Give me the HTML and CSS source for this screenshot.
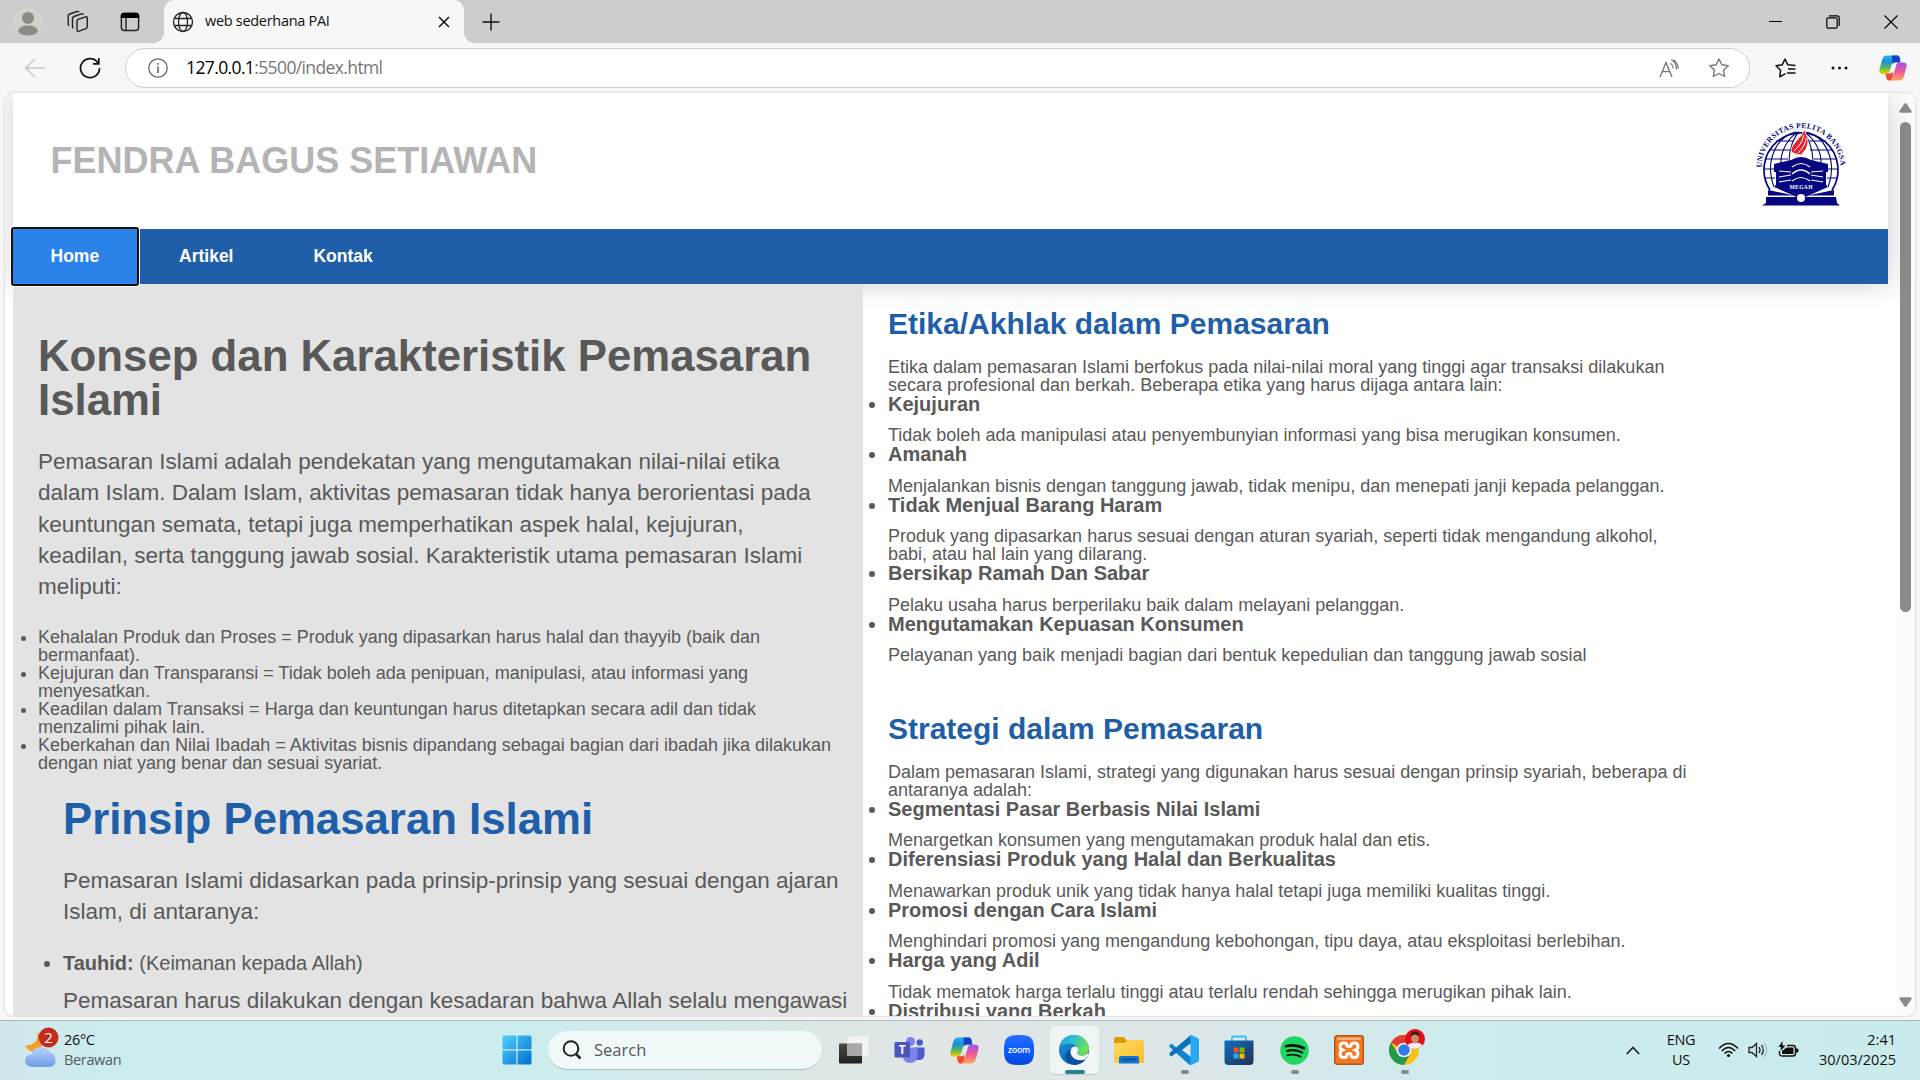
FILE: index.html
```
<!DOCTYPE html>
<html lang="id">
<head>
<meta charset="utf-8">
<title>web sederhana PAI</title>
<link rel="stylesheet" href="styles.css">
</head>
<body>
<svg width="0" height="0" class="defs" aria-hidden="true">
  <defs>
    <linearGradient id="cpA" x1="0" y1="0" x2="0" y2="1"><stop offset="0" stop-color="#1fb0f5"/><stop offset=".35" stop-color="#1c8fd8"/><stop offset=".7" stop-color="#63bd4a"/><stop offset="1" stop-color="#ffd000"/></linearGradient>
    <linearGradient id="cpB" x1="0" y1="0" x2="0" y2="1"><stop offset="0" stop-color="#a04ff0"/><stop offset=".5" stop-color="#ee5a96"/><stop offset="1" stop-color="#ffa45c"/></linearGradient>
    <linearGradient id="win" x1="0" y1="0" x2="1" y2="1"><stop offset="0" stop-color="#4fd0fb"/><stop offset="1" stop-color="#0270d0"/></linearGradient>
    <linearGradient id="edA" x1="0" y1="0" x2="1" y2=".3"><stop offset="0" stop-color="#1b9de0"/><stop offset=".5" stop-color="#30c3cf"/><stop offset="1" stop-color="#6ce052"/></linearGradient>
    <linearGradient id="edB" x1="0" y1="0" x2="1" y2="1"><stop offset="0" stop-color="#1a9ae0"/><stop offset="1" stop-color="#0a4c9a"/></linearGradient>
    <linearGradient id="fold" x1="0" y1="0" x2="1" y2="1"><stop offset="0" stop-color="#ffdc6a"/><stop offset="1" stop-color="#fbbd22"/></linearGradient>
    <linearGradient id="store" x1="0" y1="0" x2="1" y2="1"><stop offset="0" stop-color="#0e6fc4"/><stop offset="1" stop-color="#24304f"/></linearGradient>
    <linearGradient id="dark" x1="0" y1="0" x2="0" y2="1"><stop offset="0" stop-color="#4a4a48"/><stop offset="1" stop-color="#20201f"/></linearGradient>
    <linearGradient id="zm" x1="0" y1="0" x2="0" y2="1"><stop offset="0" stop-color="#2a6cff"/><stop offset=".5" stop-color="#0b5cff"/><stop offset="1" stop-color="#0646d8"/></linearGradient>
    <linearGradient id="cloud" x1="0" y1="0" x2="0" y2="1"><stop offset="0" stop-color="#b9d5fb"/><stop offset="1" stop-color="#709be8"/></linearGradient>
    <symbol id="copilot" viewBox="0 0 28 26">
      <path d="M18 0.5H8C5 0.5 4 2 3 5L0.6 14C-0.2 17.5 1 19 4 19H7.5C9.5 19 10.2 17.500 10.700 16L13.500 7C14 5 15 4 17 4H21.500C20.800 2 20.500 0.500 18 0.500Z" fill="url(#cpA)"/>
      <path d="M13 0.500H18C20.500 0.500 20.500 3 21.800 7.500H17C15 7.500 14 8 13.400 9.500Z" fill="#1641c0"/>
      <path d="M10 25.500H20C23 25.500 24.200 24 25 21L27.400 12C28.200 8.500 27 7.500 24 7.500H20.500C18.500 7.500 17.800 8.500 17.300 10L14.500 19C14 21 13 21.500 11 21.500H7C7.500 24 8.300 25.500 10 25.500Z" fill="url(#cpB)"/>
      <path d="M6.500 18.500H10.500L14 17.500 13.600 21.500C12.600 24.500 12 25.500 10 25.500 7.800 25.500 7.500 22.500 6.500 18.500Z" fill="#ee4b36"/>
    </symbol>
  </defs>
</svg>

<div class="screen">
  <header class="tabstrip">
    <div class="tabstrip-tools">
      <svg width="28" height="28" viewBox="0 0 28 28"><circle cx="14" cy="14" r="13.300" fill="#d2d0cc" stroke="#dddbd8"/><circle cx="14" cy="10" r="6" fill="#8d8a86"/><path d="M4 23.500C5 18.500 9 17.500 14 17.500S23 18.500 24 23.500C21.500 26.500 18 27.500 14 27.500S6.500 26.500 4 23.500Z" fill="#8d8a86"/></svg>
      <svg width="24" height="24" viewBox="0 0 24 24" fill="none" stroke="#222" stroke-width="1.400" stroke-linejoin="round"><path d="M12.200 9.300 19.500 6.800Q21.300 6.300 21.300 8.200V16.500Q21.300 18 20 18.600L13 21.200Q11 21.800 11 19.800V11.200Q11 9.800 12.200 9.300Z"/><path d="M7.300 18.300Q6.500 17.800 6.500 16.500V8.500Q6.500 7 8 6.500L15.500 3.900Q17 3.500 17.300 4.700"/><path d="M3.200 15.500Q2.200 15 2.200 13.700V6Q2.200 4.500 3.700 4L11 1.500Q12.500 1.100 12.900 2.300"/></svg>
      <svg width="20" height="20" viewBox="0 0 20 20"><rect x="1.400" y="1.400" width="17.200" height="17.200" rx="3" fill="none" stroke="#222" stroke-width="1.500"/><path d="M.8 6V4Q.8.700 4 .700H16Q19.200.700 19.200 4V6Z" fill="#000"/><path d="M6 6V18.500" stroke="#222" stroke-width="1.400"/></svg>
    </div>
    <div class="tab">
      <svg width="22" height="22" viewBox="0 0 22 22" fill="none" stroke="#222" stroke-width="1.300"><circle cx="11" cy="11" r="9.500"/><ellipse cx="11" cy="11" rx="4.500" ry="9.500"/><path d="M2.500 7.500H19.500M2.500 14.500H19.500"/></svg>
      <span class="tab-title">web sederhana PAI</span>
      <svg width="12" height="12" viewBox="0 0 12 12" stroke="#111" stroke-width="1.500"><path d="M1 1 11 11M11 1 1 11"/></svg>
    </div>
    <svg class="newtab" width="18" height="18" viewBox="0 0 18 18" stroke="#111" stroke-width="1.400"><path d="M9 0.500V17.500M.5 9H17.500"/></svg>
    <div class="winbuttons">
      <svg width="13" height="14" viewBox="0 0 13 14" stroke="#000" stroke-width="1"><path d="M0 6.500H13"/></svg>
      <svg width="14" height="14" viewBox="0 0 14 14" fill="none" stroke="#000" stroke-width="1.200"><rect x=".8" y="2.800" width="10.400" height="10.400" rx="1.500"/><path d="M3 .8H11Q13.200.8 13.200 3V11"/></svg>
      <svg width="14" height="14" viewBox="0 0 14 14" stroke="#000" stroke-width="1.100"><path d="M.5.500 13.500 13.500M13.500.500.500 13.500"/></svg>
    </div>
  </header>

  <div class="toolbar">
    <svg width="22" height="22" viewBox="0 0 22 22" fill="none" stroke="#c8c8c8" stroke-width="1.500"><path d="M21 11H2M11 2 1.500 11 11 20"/></svg>
    <svg class="reload" width="22" height="22" viewBox="0 0 22 22" fill="none" stroke="#111" stroke-width="1.700"><path d="M19.300 6.500A9.500 9.500 0 1 0 20.500 11M19.800 1V6.800H14"/></svg>
    <div class="address">
      <svg width="20" height="20" viewBox="0 0 20 20" fill="none" stroke="#666" stroke-width="1.300"><circle cx="10" cy="10" r="9.200"/><path d="M10 8.500V15M10 5V6.800" stroke-width="1.600"/></svg>
      <span class="url"><b>127.0.0.1</b>:5500/index.html</span>
      <svg width="20" height="19" viewBox="0 0 20 19" fill="none" stroke="#777" stroke-width="1.300"><path d="M1 18 7 3.500 13 18M3.200 12.700H10.800M11.500 4.200Q14 6 14.300 9.500M12.300.8Q17.300 3.500 17.500 10.500M14.500.8Q19 4.500 19.200 9.500"/></svg>
      <svg class="star" width="20" height="20" viewBox="0 0 20 20" fill="none" stroke="#777" stroke-width="1.400" stroke-linejoin="round"><path d="M10 1 12.800 6.800 19.200 7.700 14.600 12.100 15.700 18.500 10 15.500 4.300 18.500 5.400 12.100.8 7.700 7.200 6.800Z"/></svg>
    </div>
    <div class="toolbar-right">
      <svg width="21" height="20" viewBox="0 0 21 20" fill="none" stroke="#111" stroke-width="1.500" stroke-linejoin="round"><path d="M10.500 15.600 4.800 18.800 5.600 12.300 1 7.700 7.200 6.800 10 1 12.800 6.800 20.500 7.500M13 11H20.500M12 15H20.500"/></svg>
      <svg class="dots" width="17" height="4" viewBox="0 0 17 4" fill="#111"><circle cx="2" cy="2" r="1.500"/><circle cx="8.500" cy="2" r="1.500"/><circle cx="15" cy="2" r="1.500"/></svg>
      <svg width="28" height="26"><use href="#copilot"/></svg>
    </div>
  </div>

  <div class="viewport">
    <div class="page">
      <div class="masthead">
        <div class="banner">
          <h1>FENDRA BAGUS SETIAWAN</h1>
          <svg class="crest" width="92" height="86" viewBox="0 0 92 86">
            <defs><path id="arc" d="M6.500 46.500A39.500 39.500 0 0 1 85.500 46.500"/></defs>
            <text class="crest-name"><textPath href="#arc" textLength="122" lengthAdjust="spacing">UNIVERSITAS PELITA BANGSA</textPath></text>
            <g fill="none" stroke="#060680" stroke-width="1.100">
              <path d="M15 69A37 37 0 1 1 77 69" stroke-width="1.700"/>
              <path d="M19 66C8 36 26 12 42 11M26 44C25 30 34 15 44 11M34 40C34 28 39 16 44 11M58 40C58 28 53 16 48 11M66 44C67 30 58 15 48 11M73 66C84 36 66 12 50 11M21 20H38M54 20H71M14 29H37M55 29H78M10 38H33M59 38H82M9 48H20M72 48H83M10 57H20M72 57H82"/>
            </g>
            <path d="M36 30C36 22 47 17 49.500 8C51 15 55 20 52 27L47 34Q37 33 36 30Z" fill="#e8222c" stroke="#fff" stroke-width=".8"/>
            <path d="M39 30Q48 22 48.500 14M43 32Q51 24 51 17M47 33Q53 28 53 22" stroke="#fff" stroke-width="1" fill="none"/>
            <path d="M19 43 36 39Q46 33 56 39L73 43V51H71V65L46 75 21 65V51H19Z" fill="#060680"/>
            <g fill="none" stroke="#fff" stroke-width="1.200"><path d="M37 46Q46 39 55 46M37 53Q46 45 55 53M37 60Q46 53 55 60M24 50 36 51M24 56 36 54M24 61 36 59M68 50 56 51M68 56 56 54M68 61 56 59"/></g>
            <text x="46" y="68" class="crest-motto" textLength="23">MEGAH</text>
            <path d="M20 65 45 76M72 65 47 76" stroke="#060680" stroke-width="2.500"/>
            <path d="M13 69 39 74.500H13ZM79 69 53 74.500H79ZM11 76H81L82 82 85 84.500H7L11 82Z" fill="#060680"/>
            <circle cx="46" cy="77" r="4" fill="#fff"/>
          </svg>
        </div>
        <nav class="menu"><a class="active">Home</a><a>Artikel</a><a>Kontak</a></nav>
      </div>

      <div class="columns">
        <main class="lead">
          <h2>Konsep dan Karakteristik Pemasaran<br>Islami</h2>
          <p class="intro">Pemasaran Islami adalah pendekatan yang mengutamakan nilai-nilai etika<br>dalam Islam. Dalam Islam, aktivitas pemasaran tidak hanya berorientasi pada<br>keuntungan semata, tetapi juga memperhatikan aspek halal, kejujuran,<br>keadilan, serta tanggung jawab sosial. Karakteristik utama pemasaran Islami<br>meliputi:</p>
          <ul class="traits">
            <li>Kehalalan Produk dan Proses = Produk yang dipasarkan harus halal dan thayyib (baik dan<br>bermanfaat).</li>
            <li>Kejujuran dan Transparansi = Tidak boleh ada penipuan, manipulasi, atau informasi yang<br>menyesatkan.</li>
            <li>Keadilan dalam Transaksi = Harga dan keuntungan harus ditetapkan secara adil dan tidak<br>menzalimi pihak lain.</li>
            <li>Keberkahan dan Nilai Ibadah = Aktivitas bisnis dipandang sebagai bagian dari ibadah jika dilakukan<br>dengan niat yang benar dan sesuai syariat.</li>
          </ul>
          <section class="principles">
            <h2 class="blue">Prinsip Pemasaran Islami</h2>
            <p class="intro">Pemasaran Islami didasarkan pada prinsip-prinsip yang sesuai dengan ajaran<br>Islam, di antaranya:</p>
            <ul class="principle-list">
              <li><b>Tauhid:</b> (Keimanan kepada Allah)
                <p class="intro">Pemasaran harus dilakukan dengan kesadaran bahwa Allah selalu mengawasi</p></li>
            </ul>
          </section>
        </main>

        <aside class="side">
          <section>
            <h3>Etika/Akhlak dalam Pemasaran</h3>
            <p>Etika dalam pemasaran Islami berfokus pada nilai-nilai moral yang tinggi agar transaksi dilakukan<br>secara profesional dan berkah. Beberapa etika yang harus dijaga antara lain:</p>
            <ul>
              <li><b>Kejujuran</b><p>Tidak boleh ada manipulasi atau penyembunyian informasi yang bisa merugikan konsumen.</p></li>
              <li><b>Amanah</b><p>Menjalankan bisnis dengan tanggung jawab, tidak menipu, dan menepati janji kepada pelanggan.</p></li>
              <li><b>Tidak Menjual Barang Haram</b><p>Produk yang dipasarkan harus sesuai dengan aturan syariah, seperti tidak mengandung alkohol,<br>babi, atau hal lain yang dilarang.</p></li>
              <li><b>Bersikap Ramah Dan Sabar</b><p>Pelaku usaha harus berperilaku baik dalam melayani pelanggan.</p></li>
              <li><b>Mengutamakan Kepuasan Konsumen</b><p>Pelayanan yang baik menjadi bagian dari bentuk kepedulian dan tanggung jawab sosial</p></li>
            </ul>
          </section>
          <section>
            <h3>Strategi dalam Pemasaran</h3>
            <p>Dalam pemasaran Islami, strategi yang digunakan harus sesuai dengan prinsip syariah, beberapa di<br>antaranya adalah:</p>
            <ul>
              <li><b>Segmentasi Pasar Berbasis Nilai Islami</b><p>Menargetkan konsumen yang mengutamakan produk halal dan etis.</p></li>
              <li><b>Diferensiasi Produk yang Halal dan Berkualitas</b><p>Menawarkan produk unik yang tidak hanya halal tetapi juga memiliki kualitas tinggi.</p></li>
              <li><b>Promosi dengan Cara Islami</b><p>Menghindari promosi yang mengandung kebohongan, tipu daya, atau eksploitasi berlebihan.</p></li>
              <li><b>Harga yang Adil</b><p>Tidak mematok harga terlalu tinggi atau terlalu rendah sehingga merugikan pihak lain.</p></li>
              <li><b>Distribusi yang Berkah</b></li>
            </ul>
          </section>
        </aside>
      </div>
    </div>
    <div class="scrollbar">
      <svg width="13" height="10" viewBox="0 0 13 10" fill="#8b8b8b"><path d="M5.500.600Q6.500-.3 7.500.600L12.600 8Q13 9.600 11.500 9.800H1.500Q0 9.600.400 8Z"/></svg>
      <div class="thumb"></div>
      <svg width="13" height="10" viewBox="0 0 13 10" fill="#8b8b8b"><path d="M5.500 9.400Q6.500 10.300 7.500 9.400L12.600 2Q13 .4 11.500.2H1.500Q0 .4.400 2Z"/></svg>
    </div>
  </div>

  <footer class="taskbar">
    <div class="weather">
      <svg width="36" height="46" viewBox="0 0 36 46"><path d="M13 7Q16 19 1 21Q6 29 16 27L20 16Z" fill="#f3a127"/><path d="M8 42Q1 41 1 35.500 1.500 30 7.500 29.500 9 22 17 22 24 22 26 28 31.500 28 31.500 35 31.500 41.500 25 42Z" fill="url(#cloud)"/><circle cx="24.500" cy="12.500" r="10" fill="#c42b1c"/><text x="24.500" y="18" class="badge">2</text></svg>
      <div class="weather-text"><span>26°C</span><span class="dim">Berawan</span></div>
    </div>
    <div class="apps">
      <div class="app"><svg width="30" height="30" viewBox="0 0 30 30" fill="url(#win)"><path d="M.500 2Q.500.500 2 .500H14.300V14.300H.500ZM15.500.500H28Q29.500.500 29.500 2V14.300H15.500ZM.500 15.500H14.300V29.500H2Q.500 29.500.500 28ZM15.500 15.500H29.500V28Q29.500 29.500 28 29.500H15.500Z"/></svg></div>
      <div class="search"><svg width="20" height="20" viewBox="0 0 20 20" fill="none" stroke="#222" stroke-width="2"><circle cx="9" cy="8.500" r="7.300"/><path d="M14 14 18.500 18.500" stroke-width="2.500"/></svg><span>Search</span></div>
      <div class="app"><svg width="32" height="30" viewBox="0 0 32 30"><rect x="1" y="8.500" width="23" height="20" rx="1" fill="url(#dark)"/><path d="M9 1H30Q31 1 31 2V20Q31 21 30 21H24V8.500H9Z" fill="#f4f4f4" stroke="#dedede" stroke-width=".5"/><path d="M9 8.500H24V21H9Z" fill="#a9a9a8"/></svg></div>
      <div class="app"><svg width="31" height="28" viewBox="0 0 31 28"><circle cx="16.500" cy="5.500" r="4.500" fill="#7b83eb"/><circle cx="25.700" cy="6.500" r="3.200" fill="#5059c9"/><path d="M21 11.500H30.500V19Q30 24 25 24H21Z" fill="#5059c9"/><path d="M9 11.500H23.500V20Q23 27 16 27T9 20Z" fill="#7b83eb"/><rect x=".5" y="6" width="15.500" height="15.500" rx="1.300" fill="#4b53bc"/><text x="8.200" y="18" class="teams-t">T</text></svg></div>
      <div class="app"><svg width="29" height="27"><use href="#copilot"/></svg></div>
      <div class="app"><svg width="30" height="30" viewBox="0 0 30 30"><path d="M15 0C27 0 30 3 30 15S27 30 15 30 0 27 0 15 3 0 15 0Z" fill="url(#zm)"/><text x="15" y="17.500" class="zoom-t" textLength="22">zoom</text></svg></div>
      <div class="app current"><svg width="30" height="30" viewBox="0 0 30 30"><circle cx="15" cy="15" r="15" fill="url(#edB)"/><path d="M.300 12C2 4 8 0 15 0 24 0 30 7 30 13 30 19 25 21 21.500 20.500 18.500 20 17.500 18.500 18.800 17 20 12 16 8.500 11 8.500 5 8.500 1 11 .300 12Z" fill="url(#edA)"/><path d="M11.500 17C12 11.500 16 10.500 18.500 12.500 20.500 15 17.500 17 18.500 19 21 22 27 20.500 29 18L29.500 20 26 24.500C19 27 12 23 11.500 17Z" fill="#f4f7f7"/><path d="M11.500 14C9 22 15 27 25.500 25.300 22 30 15 31 10 28 4 23 6 16 11.500 14Z" fill="#104f9d"/></svg></div>
      <div class="app"><svg width="30" height="27" viewBox="0 0 30 27"><path d="M0 2Q0 0 2 0H9.500L13 3.500V9H0Z" fill="#dd9b06"/><path d="M0 6H11L13.500 3H28.500Q30 3 30 4.500V25Q30 26 29 26H1Q0 26 0 25Z" fill="url(#fold)"/><path d="M5 26.500V21Q5 19 7 19H23Q25 19 25 21V26.500Z" fill="#1274ca"/><path d="M8.500 22.500H21.500" stroke="#084b8b" stroke-width="1.500"/></svg></div>
      <div class="app running"><svg width="30" height="30" viewBox="0 0 30 30"><path d="M22 0 8 13 3 9Q2 8.500 .5 10V12L20 29.500 22 30V22L13 15 22 8Z" fill="#0e86cf"/><path d="M22 0 .5 18V20Q1.500 21.500 3 21L22 7.500Z" fill="#0a72b8"/><path d="M22 0 29 3Q30 3.500 30 5V25Q30 26.500 29 27L22 30Q20.500 30 20 29Q21.500 29 21.500 27V3Q21.500 1 20 1Q20.500 0 22 0Z" fill="#2aa9f3"/></svg></div>
      <div class="app"><svg width="30" height="30" viewBox="0 0 30 30"><path d="M8 6V2.500Q8 1.500 9 1.500H21Q22 1.500 22 2.500V6" fill="none" stroke="#2fc4ef" stroke-width="1.800"/><path d="M.500 5.500H29.500V26Q29.500 30 25.500 30H4.500Q.500 30 .500 26Z" fill="url(#store)"/><path d="M9.500 12.500H14.500V17.500H9.500Z" fill="#f25022"/><path d="M15.500 12.500H20.500V17.500H15.500Z" fill="#7fba00"/><path d="M9.500 18.500H14.500V23.500H9.500Z" fill="#29a8ea"/><path d="M15.500 18.500H20.500V23.500H15.500Z" fill="#ffb900"/></svg></div>
      <div class="app running"><svg width="29" height="29" viewBox="0 0 29 29"><circle cx="14.500" cy="14.500" r="14.300" fill="#1ed760"/><g fill="none" stroke="#111" stroke-linecap="round"><path d="M6 10.300Q15.500 7.600 24 12.300" stroke-width="2.700"/><path d="M7 15Q15 12.700 22 16.600" stroke-width="2.300"/><path d="M7.500 19.300Q14.500 17.500 20.500 20.700" stroke-width="1.900"/></g></svg></div>
      <div class="app"><svg width="30" height="30" viewBox="0 0 30 30"><rect x=".7" y=".7" width="28.600" height="28.600" rx="2.500" fill="#f37623" stroke="#b85413" stroke-width="1.400"/><path d="M3 2.500H27V5H3Z" fill="#fbb27c"/><path d="M10 8Q6 8 6 11.500 6 14 8.500 15 6 16 6 19 6 22.500 10 22.500 13 22.500 13 19.500 13 18.500 15 18.500T17 19.500Q17 22.500 20 22.500 24 22.500 24 19 24 16 21.500 15 24 14 24 11.500 24 8 20 8 17 8 17 10.500 17 11.500 15 11.500T13 10.500Q13 8 10 8Z" fill="none" stroke="#fff" stroke-width="3"/></svg></div>
      <div class="app running"><svg class="chrome" width="36" height="36" viewBox="0 0 36 36"><circle cx="15" cy="21" r="15" fill="#fbc116"/><path d="M15 21 2 13.500A15 15 0 0 1 28 13.500L28.500 15H15Z" fill="#e33b2e"/><path d="M2 13.500A15 15 0 0 0 15 36L21.500 24.500 8.700 24.500Z" fill="#239a4b"/><circle cx="15" cy="21" r="7.300" fill="#fff"/><circle cx="15" cy="21" r="5.800" fill="#3178e8"/><circle cx="26" cy="10" r="10" fill="#e80c12"/><path d="M18.500 16.500Q20 13.500 26 13.500T33.500 16.500Q30 20 26 20T18.500 16.500Z" fill="#f1eeee"/><ellipse cx="26" cy="9" rx="3.800" ry="5.200" fill="#c98c70"/><path d="M21.800 8Q21 2.500 26 2.500T30.200 8Q28.500 5.500 26 5.500T21.800 8Z" fill="#33211d"/></svg></div>
    </div>
    <div class="tray">
      <svg width="14" height="9" viewBox="0 0 14 9" fill="none" stroke="#222" stroke-width="1.700"><path d="M.8 8 7 1.500 13.200 8"/></svg>
      <div class="lang"><span>ENG</span><span>US</span></div>
      <svg class="wifi" width="21" height="16" viewBox="0 0 21 16" fill="none" stroke="#111" stroke-width="1.500"><path d="M1 6.500Q10.500-3.500 20 6.500M3.800 9Q10.500 1.800 17.200 9M6.500 11.500Q10.500 7.300 14.500 11.500"/><circle cx="10.500" cy="13.500" r="1.600" fill="#111" stroke="none"/></svg>
      <svg class="sound" width="20" height="16" viewBox="0 0 20 16" fill="none" stroke="#222" stroke-width="1.300"><path d="M1 5.500H4L8.500 1.500V14.500L4 10.500H1ZM11 5Q13 8 11 11M13.500 3Q17 8 13.500 13"/><path d="M16 1Q21.500 8 16 15" stroke="#a5bfc0"/></svg>
      <svg class="battery" width="21" height="18" viewBox="0 0 21 18"><path d="M9 4.500H15Q17.500 4.500 17.500 7V12.500Q17.500 15 15 15H4Q1.500 15 1.500 12.500V10" fill="none" stroke="#111" stroke-width="1.400"/><path d="M4 13V10L8.500 6.500H15.500V13ZM18 7.500H19.500Q20.500 7.500 20.500 9.500T19.500 11.500H18Z" fill="#111"/><path d="M4.500 0 .5 6H3L2.500 10 7.500 4.500H4.500Z" fill="#111"/></svg>
      <div class="clock"><span>2:41</span><span>30/03/2025</span></div>
    </div>
  </footer>
</div>
</body>
</html>
```
FILE: styles.css
```
* { box-sizing: border-box; }
html, body { margin: 0; height: 100%; overflow: hidden; }
svg { display: block; flex: none; }
.defs { position: absolute; }

.screen {
  width: 1920px; height: 1080px;
  display: flex; flex-direction: column;
  background: #f7f7f7;
  font-family: "Open Sans", "Noto Sans", sans-serif;
}

/* browser tab strip */
.tabstrip { height: 43px; background: #cdcdcd; display: flex; align-items: center; flex: none; }
.tabstrip-tools { width: 164px; display: flex; align-items: center; padding-left: 14px; gap: 24px; }
.tabstrip-tools svg:last-child { margin-left: 6px; }
.tab {
  width: 300px; height: 43px; padding: 0 14px 0 8px;
  display: flex; align-items: center;
  background: #f7f7f7; border-radius: 10px 10px 0 0;
  position: relative;
}
.tab::before, .tab::after {
  content: ""; position: absolute; bottom: 0; width: 10px; height: 10px;
}
.tab::before { left: -10px; background: radial-gradient(circle at 0 0, #cdcdcd 9.500px, #f7f7f7 10px); }
.tab::after { right: -10px; background: radial-gradient(circle at 100% 0, #cdcdcd 9.500px, #f7f7f7 10px); }
.tab-title { flex: 1; margin: -2px 0 0 11px; font-size: 14.500px; letter-spacing: -.3px; color: #111; }
.newtab { margin-left: 18px; }
.winbuttons { margin-left: auto; display: flex; gap: 44px; padding-right: 22px; }

/* toolbar */
.toolbar { height: 50px; display: flex; align-items: center; padding: 0 13px 0 24px; flex: none; }
.reload { margin-left: 33px; }
.address {
  width: 1625px; height: 40px; margin-left: 24px; padding: 0 20px 0 22px;
  display: flex; align-items: center;
  background: #fff; border: 1px solid #cfcfcf; border-radius: 20px;
}
.url { flex: 1; margin: -2px 0 0 18px; font-size: 17.500px; letter-spacing: -.62px; color: #767676; }
.url b { font-weight: 400; color: #000; }
.star { margin-left: 30px; }
.toolbar-right { display: flex; align-items: center; flex: 1; justify-content: space-between; margin-left: 25px; }
.dots { margin-left: 4px; }

/* viewport */
.viewport {
  margin: 0 5px; height: 923px; flex: none;
  display: flex; overflow: hidden;
  background: #fff; border-radius: 9px;
  box-shadow: 0 0 2px 1px #dedede;
}
.page {
  width: 1875px; margin-left: 8px; flex: none;
  font-family: "Liberation Sans", Arial, sans-serif;
  font-size: 18px; line-height: 18px; color: #595959;
  white-space: nowrap;
}
.page h1, .page h2, .page h3, .page p, .page ul { margin: 0; padding: 0; }
.masthead { position: relative; background: #fff; box-shadow: 0 0 25px rgba(0, 0, 0, .2); }
.banner {
  height: 136px; padding: 0 41px 0 37.500px;
  display: flex; align-items: center; justify-content: space-between;
}
.banner h1 { font-size: 36px; line-height: 36px; color: #b4b4b4; }
.crest { margin-top: 6px; }
.crest-name { font: bold 7.600px "Liberation Serif", serif; fill: #060680; }
.crest-motto { font: bold 5.500px "Liberation Serif", serif; fill: #fff; text-anchor: middle; }
.menu { height: 55px; background: #1f5faa; display: flex; gap: 4.900px; }
.menu a { padding: 0 37.500px; font-size: 17.500px; font-weight: bold; line-height: 54px; color: #fff; }
.menu .active {
  background: #2b83ea; border-radius: 1px;
  outline: 2px solid #101010; box-shadow: 0 0 0 3px #fff;
  position: relative; z-index: 3;
}
.columns { display: flex; height: 740px; }
.lead { position: relative; width: 850px; padding: 50px 0 0 25px; background: #e3e3e3; }
.menu { position: relative; z-index: 3; }
.lead h2 { font-size: 43.750px; line-height: 44px; }
.page .lead .intro { font-size: 22.500px; line-height: 31.250px; margin: 24.200px 0 25.300px; }
.principles { padding: 25px 0 0 25px; }
.blue, .side h3 { color: #1f5faa; }
.principle-list { font-size: 20px; line-height: 20px; }
.page .lead .principle-list .intro { margin-top: 12px; }
.side { flex: 1; padding-left: 25px; }
.side section { padding: 24.500px 0 25.300px; }
.side h3 { font-size: 30px; line-height: 30px; }
.page .side h3 { margin-bottom: 19px; }
.side li { font-size: 20px; line-height: 20px; }
.page .side li p { font-size: 18px; line-height: 18px; margin-top: 12.500px; }
.side li b { display: block; }

.scrollbar {
  margin-left: auto; width: 19px; padding: 10px 0 9px;
  display: flex; flex-direction: column; align-items: center;
  background: #fcfcfc;
}
.thumb { width: 11px; height: 490px; margin: 9px 0 auto; border-radius: 6px; background: #8b8b8b; }

/* taskbar */
.taskbar {
  height: 60px; margin-top: auto; flex: none;
  display: flex; align-items: center;
  border-top: 1px solid #a4b6b9;
  background: linear-gradient(90deg, #d0e7ec 0, #cbedef 7%, #cbedee 27%, #dde7e7 43%, #e1e6e5 50%, #dbe7e9 63%, #ceebed 75%, #c9ebec 100%);
}
.weather { width: 489px; padding-left: 24px; display: flex; gap: 4px; align-items: center; }
.weather svg { margin-top: -5px; }
.weather-text { display: flex; flex-direction: column; margin-top: -2px; font-size: 14.500px; line-height: 20px; letter-spacing: -.35px; color: #111; }
.weather-text .dim { color: #4d5d60; }
.badge { font-size: 15px; fill: #fff; text-anchor: middle; }
.apps { display: flex; align-items: center; margin-top: -1px; }
.app {
  width: 55px; height: 48px; display: flex; align-items: center; justify-content: center;
  position: relative;
}
.current::before {
  content: ""; position: absolute; inset: 0 3px; background: #eff4f4; border-radius: 5px;
  box-shadow: 0 1px 1px rgba(0, 0, 0, .14);
}
.current svg { position: relative; }
.current::after, .running::after {
  content: ""; position: absolute; bottom: 0; left: 18px; width: 20px; height: 4px;
  border-radius: 2px; background: #26838f;
}
.running::after { left: 24px; width: 8px; background: #808b8c; }
.chrome { margin: -6px 0 0 6px; }
.search {
  width: 274px; height: 39px; margin: 0 4.500px 0 4px; padding-left: 14px;
  display: flex; align-items: center; gap: 12px;
  background: #f1f8f9; border-radius: 20px; border-bottom: 1px solid #aebfc1;
  font-size: 16.500px; color: #53595a;
}
.teams-t { font: bold 12px "Open Sans", sans-serif; fill: #fff; text-anchor: middle; }
.zoom-t { font: 600 8.500px "Open Sans", sans-serif; fill: #fff; text-anchor: middle; }
.tray {
  margin-left: auto; padding-right: 24px; display: flex; align-items: center;
  font-size: 14.500px; line-height: 20px; color: #111;
}
.tray span { display: block; }
.lang { width: 34px; margin: -2px 0 0 24px; text-align: center; letter-spacing: -.3px; }
.wifi { margin: -2px 0 0 20px; }
.sound { margin: -1px 0 0 9px; }
.battery { margin: -2px 0 0 10px; }
.clock { width: 97px; margin-top: -2px; text-align: right; letter-spacing: 0; }
```
